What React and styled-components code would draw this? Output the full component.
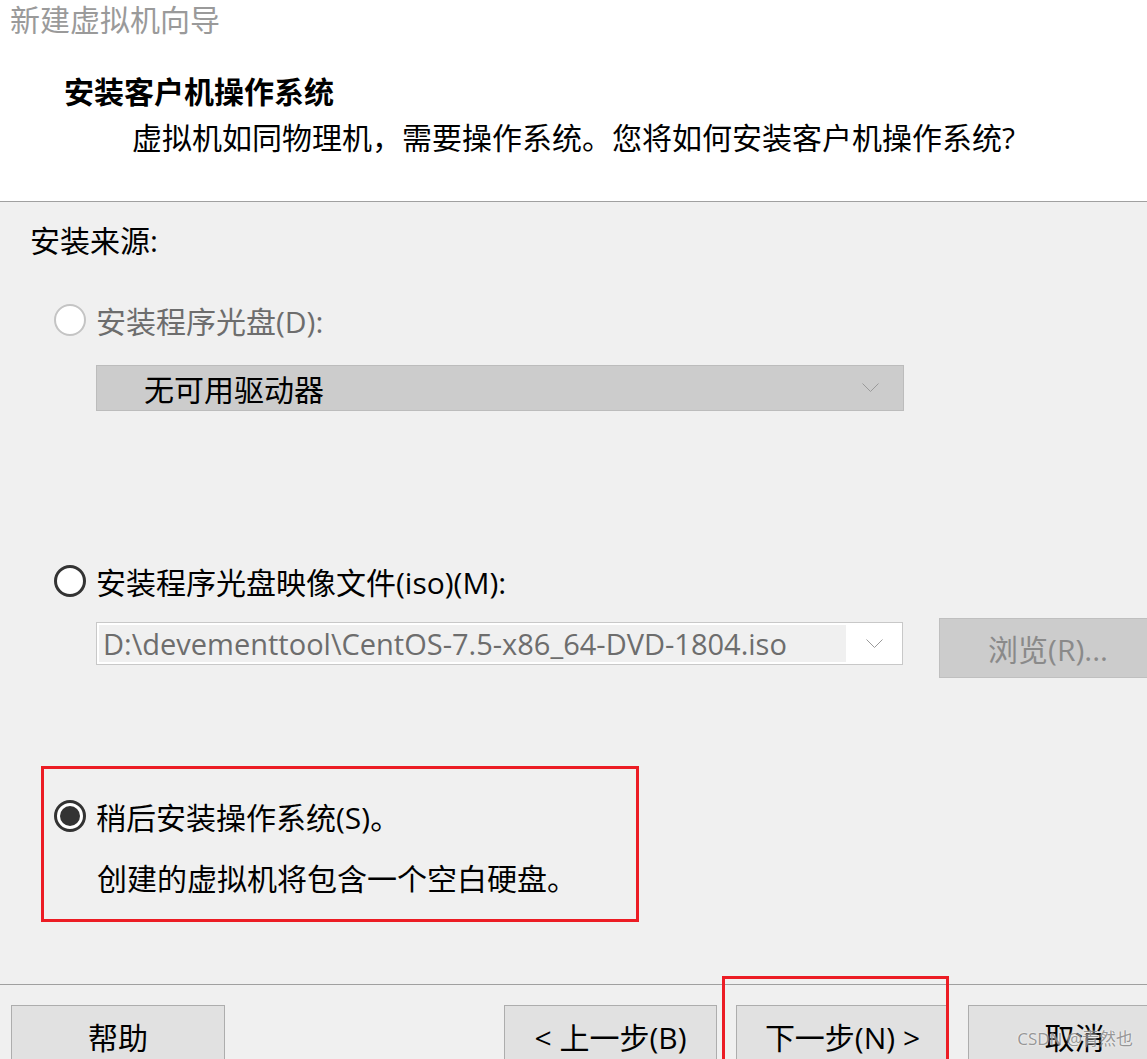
import styled, { createGlobalStyle } from 'styled-components';

const GlobalStyle = createGlobalStyle`
  html, body {
    margin: 0;
    padding: 0;
    background: #f0f0f0;
    overflow: hidden;
  }
  body {
    font-family: "Open Sans", "Noto Sans CJK SC", sans-serif;
    color: #000;
  }
`;

const Window = styled.div`
  position: relative;
  width: 1147px;
  height: 1059px;
  overflow: hidden;
  background: #f0f0f0;
`;

const Header = styled.div`
  background: #fff;
  height: 202px;
  border-bottom: 1px solid #a0a0a0;
  box-sizing: border-box;
`;

const WindowTitle = styled.div`
  padding-left: 10px;
  font-size: 30px;
  line-height: 40px;
  color: #9a9a9a;
`;

const Heading = styled.div`
  margin-top: 32px;
  padding-left: 64px;
  font-size: 30px;
  line-height: 40px;
  font-weight: 700;
`;

const SubHeading = styled.div`
  margin-top: 6px;
  padding-left: 132px;
  font-size: 30px;
  line-height: 40px;
`;

const Content = styled.div`
  padding: 19px 0 0 30px;
`;

const Label = styled.div`
  font-size: 30px;
  line-height: 40px;
`;

const OptionRow = styled.div`
  display: flex;
  align-items: center;
  gap: 10px;
  height: 40px;
  margin-top: ${(p) => p.$top || 0}px;
  padding-left: ${(p) => p.$indent || 24}px;
  font-size: 30px;
  color: ${(p) => (p.$disabled ? '#6d6d6d' : '#000')};
`;

const Radio = styled.span`
  flex: none;
  width: 32px;
  height: 32px;
  box-sizing: border-box;
  border-radius: 50%;
  background: #fff;
  border: ${(p) => (p.$disabled ? '2px solid #c4c4c4' : '3px solid #333')};
  display: flex;
  align-items: center;
  justify-content: center;
  &::after {
    content: '';
    display: ${(p) => (p.$checked ? 'block' : 'none')};
    width: 20px;
    height: 20px;
    border-radius: 50%;
    background: #333;
  }
`;

const Select = styled.div`
  margin: 25px 0 0 66px;
  width: 808px;
  height: 46px;
  box-sizing: border-box;
  background: #cccccc;
  border: 1px solid #bcbcbc;
  display: flex;
  align-items: center;
  padding: 0 24px 0 47px;
  font-size: 30px;
`;

const SelectText = styled.span`
  flex: 1;
`;

const Chevron = () => (
  <svg width="17" height="10" viewBox="0 0 17 10">
    <path d="M0.5 0.5 L8.5 8.5 L16.5 0.5" fill="none" stroke="#9a9a9a" strokeWidth="1" />
  </svg>
);

const FileRow = styled.div`
  display: flex;
  align-items: flex-start;
  gap: 36px;
  margin: 17px 0 0 66px;
`;

const Combo = styled.div`
  flex: none;
  margin-top: 4px;
  width: 807px;
  height: 43px;
  box-sizing: border-box;
  border: 1px solid #c8c8c8;
  background: #fff;
  padding: 2px 0 2px 2px;
  display: flex;
`;

const ComboText = styled.div`
  flex: 1;
  background: #f0f0f0;
  color: #6d6d6d;
  font-size: 29px;
  line-height: 37px;
  padding-left: 4px;
  white-space: nowrap;
  overflow: hidden;
`;

const ComboArrow = styled.div`
  width: 56px;
  display: flex;
  align-items: center;
  justify-content: center;
`;

const Button = styled.div`
  flex: none;
  width: ${(p) => p.$w || 213}px;
  height: ${(p) => p.$h || 62}px;
  box-sizing: border-box;
  background: ${(p) => (p.$disabled ? '#cccccc' : '#e1e1e1')};
  border: 1px solid ${(p) => (p.$disabled ? '#bfbfbf' : '#adadad')};
  color: ${(p) => (p.$disabled ? '#8a8a8a' : '#000')};
  font-size: 30px;
  display: flex;
  align-items: center;
  justify-content: center;
  white-space: nowrap;
  margin-left: ${(p) => p.$ml || 0}px;
`;

const Highlight = styled.div`
  margin: 88px 0 0 11px;
  width: 598px;
  height: 156px;
  box-sizing: border-box;
  border: 3px solid #ec1c24;
  padding-top: 27px;
`;

const Description = styled.div`
  margin-top: 23px;
  padding-left: 53px;
  font-size: 30px;
  line-height: 40px;
`;

const Footer = styled.div`
  margin-top: 62px;
  border-top: 1px solid #a0a0a0;
  padding: 20px 0 0 11px;
  display: flex;
  gap: 19px;
`;

const NextWrap = styled.div`
  position: relative;
  flex: none;
`;

const RedFrame = styled.div`
  position: absolute;
  left: -14px;
  top: -29px;
  width: 227px;
  height: 120px;
  box-sizing: border-box;
  border: 3px solid #ec1c24;
  pointer-events: none;
`;

const Watermark = styled.div`
  position: absolute;
  right: 14px;
  bottom: 9px;
  font-size: 17px;
  color: rgba(110, 110, 110, 0.7);
  text-shadow: 0 0 2px #fff;
`;

export default function App() {
  return (
    <Window>
      <GlobalStyle />
      <Header>
        <WindowTitle>新建虚拟机向导</WindowTitle>
        <Heading>安装客户机操作系统</Heading>
        <SubHeading>虚拟机如同物理机，需要操作系统。您将如何安装客户机操作系统?</SubHeading>
      </Header>
      <Content>
        <Label>安装来源:</Label>
        <OptionRow $top={39} $disabled>
          <Radio $disabled />
          安装程序光盘(D):
        </OptionRow>
        <Select>
          <SelectText>无可用驱动器</SelectText>
          <Chevron />
        </Select>
        <OptionRow $top={150}>
          <Radio />
          安装程序光盘映像文件(iso)(M):
        </OptionRow>
        <FileRow>
          <Combo>
            <ComboText>D:\devementtool\CentOS-7.5-x86_64-DVD-1804.iso</ComboText>
            <ComboArrow>
              <Chevron />
            </ComboArrow>
          </Combo>
          <Button $disabled $w={218} $h={60}>浏览(R)...</Button>
        </FileRow>
        <Highlight>
          <OptionRow $indent={10}>
            <Radio $checked />
            稍后安装操作系统(S)。
          </OptionRow>
          <Description>创建的虚拟机将包含一个空白硬盘。</Description>
        </Highlight>
      </Content>
      <Footer>
        <Button $w={214}>帮助</Button>
        <Button $ml={260}>&lt; 上一步(B)</Button>
        <NextWrap>
          <Button>下一步(N) &gt;</Button>
          <RedFrame />
        </NextWrap>
        <Button>取消</Button>
      </Footer>
      <Watermark>CSDN @青然也</Watermark>
    </Window>
  );
}
